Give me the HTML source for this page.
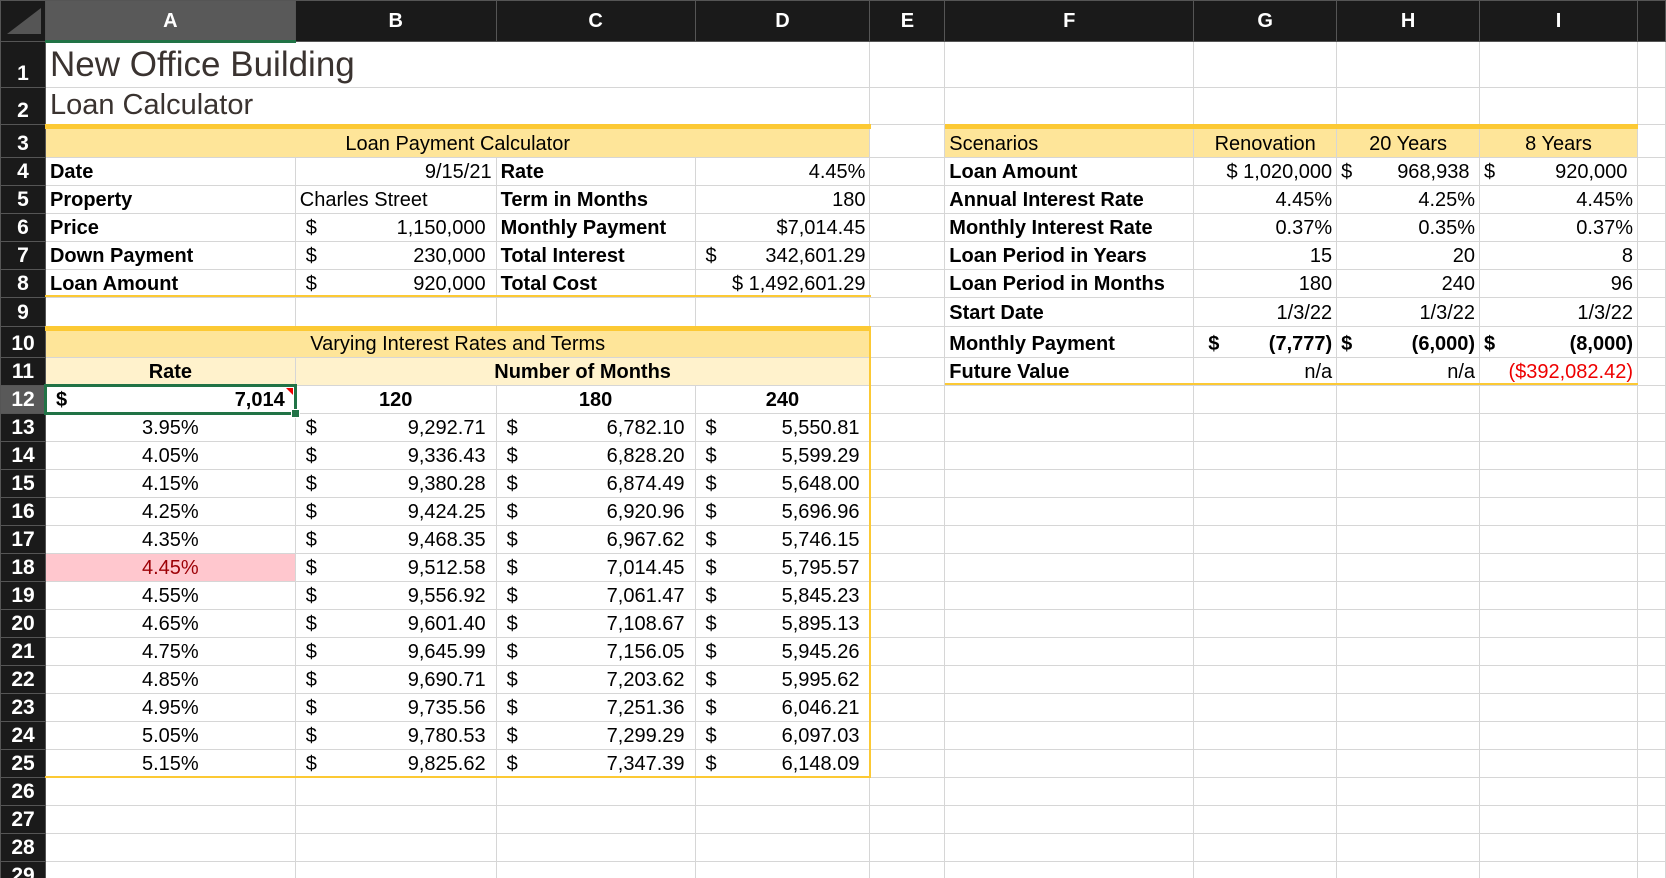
<!DOCTYPE html>
<html><head><meta charset="utf-8"><style>
*{margin:0;padding:0;box-sizing:border-box}
html,body{width:1666px;height:878px;overflow:hidden}
body{background:#fff;font-family:"Liberation Sans",sans-serif;font-size:20px;color:#000;position:relative}
table{border-collapse:collapse;table-layout:fixed;position:absolute;left:0;top:0}
td{border:1px solid #d6d6d6;white-space:nowrap;overflow:hidden;padding:0 4px;line-height:1;vertical-align:bottom;padding-bottom:3px}
td.h{background:#1a1a1a;color:#fff;font-weight:bold;text-align:center;border-color:#555;vertical-align:middle;padding:0}
td.rh{background:#1a1a1a;color:#fff;font-weight:bold;text-align:center;border-color:#555;font-size:21px;padding:0 0 3px 0}
.b{font-weight:bold}.c{text-align:center}.r{text-align:right}
.y{background:#fee599}.y2{background:#fff2cc}
.acc{display:flex;justify-content:space-between}
.n .acc{padding:0 6px 0 6px}
.g{position:absolute;background:#fcc934}
</style></head><body>
<table>
<colgroup><col style="width:45px"><col style="width:250px"><col style="width:201px"><col style="width:199px"><col style="width:175px"><col style="width:75px"><col style="width:249px"><col style="width:143px"><col style="width:143px"><col style="width:158px"><col style="width:28px"></colgroup>
<tr style="height:41px"><td class="h" style="background:#1a1a1a"><div style="width:0;height:0;border-left:34px solid transparent;border-bottom:26px solid #555;margin:0 0 0 6px"></div></td><td class="h" style="background:#595959;border-bottom:3px solid #217346">A</td><td class="h">B</td><td class="h">C</td><td class="h">D</td><td class="h">E</td><td class="h">F</td><td class="h">G</td><td class="h">H</td><td class="h">I</td><td class="h"></td></tr>
<tr style="height:46px"><td class="rh">1</td><td colspan="4" style="font-size:35px;color:#3a3330;padding-bottom:5px;border-right:none">New Office Building</td><td></td><td></td><td></td><td></td><td></td><td></td></tr>
<tr style="height:37px"><td class="rh">2</td><td colspan="4" style="font-size:29px;color:#3a3330;padding-bottom:4px">Loan Calculator</td><td></td><td></td><td></td><td></td><td></td><td></td></tr>
<tr style="height:33px"><td class="rh">3</td><td colspan="4" class="y c">Loan Payment Calculator</td><td></td><td class="y">Scenarios</td><td class="y c">Renovation</td><td class="y c">20 Years</td><td class="y c">8 Years</td><td></td></tr>
<tr style="height:28px"><td class="rh">4</td><td class="b">Date</td><td class="r">9/15/21</td><td class="b">Rate</td><td class="r">4.45%</td><td></td><td class="b">Loan Amount</td><td class="r">$ 1,020,000</td><td><div class="acc"><span>$</span><span>968,938&nbsp;</span></div></td><td><div class="acc"><span>$</span><span>920,000&nbsp;</span></div></td><td></td></tr>
<tr style="height:28px"><td class="rh">5</td><td class="b">Property</td><td>Charles Street</td><td class="b">Term in Months</td><td class="r">180</td><td></td><td class="b">Annual Interest Rate</td><td class="r">4.45%</td><td class="r">4.25%</td><td class="r">4.45%</td><td></td></tr>
<tr style="height:28px" class="n"><td class="rh">6</td><td class="b">Price</td><td><div class="acc"><span>$</span><span>1,150,000</span></div></td><td class="b">Monthly Payment</td><td class="r">$7,014.45</td><td></td><td class="b">Monthly Interest Rate</td><td class="r">0.37%</td><td class="r">0.35%</td><td class="r">0.37%</td><td></td></tr>
<tr style="height:28px" class="n"><td class="rh">7</td><td class="b">Down Payment</td><td><div class="acc"><span>$</span><span>230,000</span></div></td><td class="b">Total Interest</td><td><div class="acc" style="padding:0 0 0 6px"><span>$</span><span>342,601.29</span></div></td><td></td><td class="b">Loan Period in Years</td><td class="r">15</td><td class="r">20</td><td class="r">8</td><td></td></tr>
<tr style="height:28px" class="n"><td class="rh">8</td><td class="b">Loan Amount</td><td><div class="acc"><span>$</span><span>920,000</span></div></td><td class="b">Total Cost</td><td class="r">$ 1,492,601.29</td><td></td><td class="b">Loan Period in Months</td><td class="r">180</td><td class="r">240</td><td class="r">96</td><td></td></tr>
<tr style="height:29px"><td class="rh">9</td><td></td><td></td><td></td><td></td><td></td><td class="b">Start Date</td><td class="r">1/3/22</td><td class="r">1/3/22</td><td class="r">1/3/22</td><td></td></tr>
<tr style="height:31px"><td class="rh">10</td><td colspan="4" class="y c">Varying Interest Rates and Terms</td><td></td><td class="b">Monthly Payment</td><td class="b"><div class="acc" style="padding-left:10px"><span>$</span><span>(7,777)</span></div></td><td class="b"><div class="acc"><span>$</span><span>(6,000)</span></div></td><td class="b"><div class="acc"><span>$</span><span>(8,000)</span></div></td><td></td></tr>
<tr style="height:28px"><td class="rh">11</td><td class="y2 b c">Rate</td><td colspan="3" class="y2 b c">Number of Months</td><td></td><td class="b">Future Value</td><td class="r">n/a</td><td class="r">n/a</td><td class="r" style="color:#e00">($392,082.42)</td><td></td></tr>
<tr style="height:28px"><td class="rh" style="background:#595959">12</td><td class="b"><div class="acc" style="padding:0 6px 0 6px"><span>$</span><span>7,014</span></div></td><td class="b c">120</td><td class="b c">180</td><td class="b c">240</td><td></td><td></td><td></td><td></td><td></td><td></td></tr>
<tr style="height:28px" class="n"><td class="rh">13</td><td class="c">3.95%</td><td><div class="acc"><span>$</span><span>9,292.71</span></div></td><td><div class="acc"><span>$</span><span>6,782.10</span></div></td><td><div class="acc"><span>$</span><span>5,550.81</span></div></td><td></td><td></td><td></td><td></td><td></td><td></td></tr>
<tr style="height:28px" class="n"><td class="rh">14</td><td class="c">4.05%</td><td><div class="acc"><span>$</span><span>9,336.43</span></div></td><td><div class="acc"><span>$</span><span>6,828.20</span></div></td><td><div class="acc"><span>$</span><span>5,599.29</span></div></td><td></td><td></td><td></td><td></td><td></td><td></td></tr>
<tr style="height:28px" class="n"><td class="rh">15</td><td class="c">4.15%</td><td><div class="acc"><span>$</span><span>9,380.28</span></div></td><td><div class="acc"><span>$</span><span>6,874.49</span></div></td><td><div class="acc"><span>$</span><span>5,648.00</span></div></td><td></td><td></td><td></td><td></td><td></td><td></td></tr>
<tr style="height:28px" class="n"><td class="rh">16</td><td class="c">4.25%</td><td><div class="acc"><span>$</span><span>9,424.25</span></div></td><td><div class="acc"><span>$</span><span>6,920.96</span></div></td><td><div class="acc"><span>$</span><span>5,696.96</span></div></td><td></td><td></td><td></td><td></td><td></td><td></td></tr>
<tr style="height:28px" class="n"><td class="rh">17</td><td class="c">4.35%</td><td><div class="acc"><span>$</span><span>9,468.35</span></div></td><td><div class="acc"><span>$</span><span>6,967.62</span></div></td><td><div class="acc"><span>$</span><span>5,746.15</span></div></td><td></td><td></td><td></td><td></td><td></td><td></td></tr>
<tr style="height:28px" class="n"><td class="rh">18</td><td class="c" style="background:#ffc7ce;color:#9c0006">4.45%</td><td><div class="acc"><span>$</span><span>9,512.58</span></div></td><td><div class="acc"><span>$</span><span>7,014.45</span></div></td><td><div class="acc"><span>$</span><span>5,795.57</span></div></td><td></td><td></td><td></td><td></td><td></td><td></td></tr>
<tr style="height:28px" class="n"><td class="rh">19</td><td class="c">4.55%</td><td><div class="acc"><span>$</span><span>9,556.92</span></div></td><td><div class="acc"><span>$</span><span>7,061.47</span></div></td><td><div class="acc"><span>$</span><span>5,845.23</span></div></td><td></td><td></td><td></td><td></td><td></td><td></td></tr>
<tr style="height:28px" class="n"><td class="rh">20</td><td class="c">4.65%</td><td><div class="acc"><span>$</span><span>9,601.40</span></div></td><td><div class="acc"><span>$</span><span>7,108.67</span></div></td><td><div class="acc"><span>$</span><span>5,895.13</span></div></td><td></td><td></td><td></td><td></td><td></td><td></td></tr>
<tr style="height:28px" class="n"><td class="rh">21</td><td class="c">4.75%</td><td><div class="acc"><span>$</span><span>9,645.99</span></div></td><td><div class="acc"><span>$</span><span>7,156.05</span></div></td><td><div class="acc"><span>$</span><span>5,945.26</span></div></td><td></td><td></td><td></td><td></td><td></td><td></td></tr>
<tr style="height:28px" class="n"><td class="rh">22</td><td class="c">4.85%</td><td><div class="acc"><span>$</span><span>9,690.71</span></div></td><td><div class="acc"><span>$</span><span>7,203.62</span></div></td><td><div class="acc"><span>$</span><span>5,995.62</span></div></td><td></td><td></td><td></td><td></td><td></td><td></td></tr>
<tr style="height:28px" class="n"><td class="rh">23</td><td class="c">4.95%</td><td><div class="acc"><span>$</span><span>9,735.56</span></div></td><td><div class="acc"><span>$</span><span>7,251.36</span></div></td><td><div class="acc"><span>$</span><span>6,046.21</span></div></td><td></td><td></td><td></td><td></td><td></td><td></td></tr>
<tr style="height:28px" class="n"><td class="rh">24</td><td class="c">5.05%</td><td><div class="acc"><span>$</span><span>9,780.53</span></div></td><td><div class="acc"><span>$</span><span>7,299.29</span></div></td><td><div class="acc"><span>$</span><span>6,097.03</span></div></td><td></td><td></td><td></td><td></td><td></td><td></td></tr>
<tr style="height:28px" class="n"><td class="rh">25</td><td class="c">5.15%</td><td><div class="acc"><span>$</span><span>9,825.62</span></div></td><td><div class="acc"><span>$</span><span>7,347.39</span></div></td><td><div class="acc"><span>$</span><span>6,148.09</span></div></td><td></td><td></td><td></td><td></td><td></td><td></td></tr>
<tr style="height:28px"><td class="rh">26</td><td></td><td></td><td></td><td></td><td></td><td></td><td></td><td></td><td></td><td></td></tr>
<tr style="height:28px"><td class="rh">27</td><td></td><td></td><td></td><td></td><td></td><td></td><td></td><td></td><td></td><td></td></tr>
<tr style="height:28px"><td class="rh">28</td><td></td><td></td><td></td><td></td><td></td><td></td><td></td><td></td><td></td><td></td></tr>
<tr style="height:28px"><td class="rh">29</td><td></td><td></td><td></td><td></td><td></td><td></td><td></td><td></td><td></td><td></td></tr>
</table>
<div class="g" style="left:45px;top:124px;width:826px;height:5px"></div>
<div class="g" style="left:945px;top:124px;width:693px;height:5px"></div>
<div class="g" style="left:45px;top:295px;width:826px;height:2px"></div>
<div class="g" style="left:45px;top:326px;width:826px;height:5px"></div>
<div class="g" style="left:869px;top:326px;width:2px;height:452px"></div>
<div class="g" style="left:45px;top:776px;width:826px;height:2px"></div>
<div class="g" style="left:945px;top:383px;width:693px;height:2px"></div>
<div style="position:absolute;left:44px;top:384px;width:253px;height:31px;border:3px solid #217346"></div>
<div style="position:absolute;left:291px;top:409px;width:9px;height:9px;background:#217346;border:1px solid #fff"></div>
<div style="position:absolute;left:286px;top:388px;width:0;height:0;border-left:7px solid transparent;border-top:7px solid #e00"></div>
</body></html>
